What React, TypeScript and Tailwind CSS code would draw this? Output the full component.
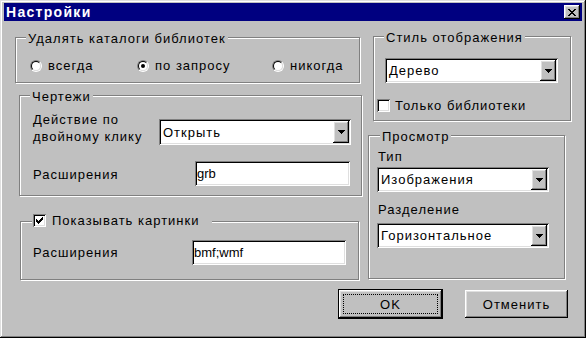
import React from 'react';

const raised =
  'shadow-[inset_-1px_-1px_0_#000,inset_1px_1px_0_#fff,inset_-2px_-2px_0_#808080,inset_2px_2px_0_#dfdfdf]';
const sunken =
  'shadow-[inset_1px_1px_0_#808080,inset_-1px_-1px_0_#fff,inset_2px_2px_0_#000,inset_-2px_-2px_0_#dfdfdf]';

function Group({ label, className, children }: { label: React.ReactNode; className: string; children: React.ReactNode }) {
  return (
    <div className={`relative border border-[#808080] shadow-[inset_1px_1px_0_#fff,1px_1px_0_#fff] ${className}`}>
      {label}
      {children}
    </div>
  );
}

function Legend({ children }: { children: React.ReactNode }) {
  return (
    <div className="absolute -top-[7px] left-[10px] bg-[#c0c0c0] px-[2px] leading-[15px]">{children}</div>
  );
}

function Combo({ value, className }: { value: string; className: string }) {
  return (
    <div className={`flex bg-white p-[2px] ${sunken} ${className}`}>
      <span className="flex flex-1 items-center pl-[2px] leading-[15px]">{value}</span>
      <div className={`flex w-[16px] items-center justify-center bg-[#c0c0c0] ${raised}`}>
        <svg width="7" height="4" viewBox="0 0 7 4" shapeRendering="crispEdges">
          <path d="M0 0h7v1H0z M1 1h5v1H1z M2 2h3v1H2z M3 3h1v1H3z" fill="#000" />
        </svg>
      </div>
    </div>
  );
}

function Edit({ value, className }: { value: string; className: string }) {
  return (
    <div className={`flex items-center bg-white pl-[2px] tracking-normal leading-[15px] ${sunken} ${className}`}>
      {value}
    </div>
  );
}

function Radio({ checked }: { checked?: boolean }) {
  return (
    <div className="h-[12px] w-[12px] shrink-0 rounded-full border border-t-[#808080] border-l-[#808080] border-r-white border-b-white">
      <div className="flex h-full w-full items-center justify-center rounded-full border border-t-black border-l-black border-r-[#dfdfdf] border-b-[#dfdfdf] bg-white">
        {checked && <div className="h-[4px] w-[4px] rounded-full bg-black" />}
      </div>
    </div>
  );
}

function Check({ checked }: { checked?: boolean }) {
  return (
    <div className={`flex h-[13px] w-[13px] shrink-0 items-center justify-center bg-white ${sunken}`}>
      {checked && (
        <svg width="7" height="7" viewBox="0 0 7 7" shapeRendering="crispEdges">
          <path
            d="M6 0h1v1H6z M5 1h2v1H5z M0 2h1v1H0z M4 2h3v1H4z M0 3h2v1H0z M3 3h3v1H3z M0 4h5v1H0z M1 5h3v1H1z M2 6h1v1H2z"
            fill="#000"
          />
        </svg>
      )}
    </div>
  );
}

export default function App() {
  return (
    <div className="h-[338px] w-[586px] bg-[#c0c0c0] px-[4px] pt-[3px] font-['Liberation_Sans',Arial,sans-serif] text-[13px] tracking-[1px] text-black shadow-[inset_-1px_-1px_0_#000,inset_1px_1px_0_#dfdfdf,inset_-2px_-2px_0_#808080,inset_2px_2px_0_#fff]">
      {/* title bar */}
      <div className="flex h-[18px] items-center justify-between bg-[#000080] pl-[2px] pr-[2px]">
        <span className="text-[14px] font-bold tracking-[1.3px] text-white">Настройки</span>
        <div className={`flex h-[14px] w-[16px] items-center justify-center bg-[#c0c0c0] ${raised}`}>
          <svg width="8" height="7" viewBox="0 0 8 7" shapeRendering="crispEdges">
            <path
              d="M0 0h2v1H0z M6 0h2v1H6z M1 1h2v1H1z M5 1h2v1H5z M2 2h4v1H2z M3 3h2v1H3z M2 4h4v1H2z M1 5h2v1H1z M5 5h2v1H5z M0 6h2v1H0z M6 6h2v1H6z"
              fill="#000"
            />
          </svg>
        </div>
      </div>

      <div className="flex">
        {/* left column */}
        <div className="flex w-[362px] flex-col">
          <Group label={<Legend>Удалять каталоги библиотек</Legend>} className="ml-[11px] mt-[16px] h-[46px] w-[345px]">
            <div className="flex pl-[14px] pt-[20px]">
              <div className="flex w-[107px] items-center gap-[6px]">
                <Radio />
                <span className="leading-[15px]">всегда</span>
              </div>
              <div className="flex w-[135px] items-center gap-[6px]">
                <Radio checked />
                <span className="leading-[15px]">по запросу</span>
              </div>
              <div className="flex items-center gap-[6px]">
                <Radio />
                <span className="leading-[15px]">никогда</span>
              </div>
            </div>
          </Group>

          <Group label={<Legend>Чертежи</Legend>} className="ml-[15px] mt-[12px] h-[101px] w-[343px]">
            <div className="flex flex-col pl-[13px] pt-[15px]">
              <div className="flex">
                <div className="w-[126px] leading-[17px]">
                  Действие по
                  <br />
                  двойному клику
                </div>
                <Combo value="Открыть" className="mt-[8px] h-[26px] w-[192px]" />
              </div>
              <div className="mt-[16px] flex items-center">
                <span className="w-[162px] pt-[2px] leading-[15px]">Расширения</span>
                <Edit value="grb" className="h-[25px] w-[155px]" />
              </div>
            </div>
          </Group>

          <Group
            label={
              <div className="absolute -top-[9px] left-[11px] flex h-[15px] items-center gap-[6px] bg-[#c0c0c0] pl-[1px] pr-[13px]">
                <Check checked />
                <span className="leading-[15px]">Показывать картинки</span>
              </div>
            }
            className="ml-[16px] mt-[25px] h-[59px] w-[339px]"
          >
            <div className="flex items-center pl-[12px] pt-[18px]">
              <span className="w-[159px] leading-[15px]">Расширения</span>
              <Edit value="bmf;wmf" className="h-[25px] w-[154px]" />
            </div>
          </Group>
        </div>

        {/* right column */}
        <div className="flex flex-col">
          <Group label={<Legend>Стиль отображения</Legend>} className="ml-[7px] mt-[15px] h-[85px] w-[198px]">
            <div className="flex flex-col pt-[21px]">
              <Combo value="Дерево" className="ml-[11px] h-[25px] w-[173px]" />
              <div className="ml-[3px] mt-[15px] flex items-center gap-[5px]">
                <Check />
                <span className="leading-[15px]">Только библиотеки</span>
              </div>
            </div>
          </Group>

          <Group
            label={<div className="absolute -top-[7px] left-[11px] bg-[#c0c0c0] px-[2px] leading-[15px]">Просмотр</div>}
            className="ml-[2px] mt-[14px] h-[144px] w-[197px]"
          >
            <div className="flex flex-col pl-[8px] pt-[13px]">
              <span className="pl-[1px] leading-[15px]">Тип</span>
              <Combo value="Изображения" className="mt-[3px] h-[25px] w-[172px]" />
              <span className="mt-[10px] pl-[1px] leading-[15px]">Разделение</span>
              <Combo value="Горизонтальное" className="mt-[6px] h-[25px] w-[172px]" />
            </div>
          </Group>
        </div>
      </div>

      {/* buttons */}
      <div className="mt-[9px] flex items-center justify-end gap-[22px] pr-[14px]">
        <div className="h-[30px] w-[105px] border border-black">
          <div className={`relative flex h-full w-full items-center justify-center bg-[#c0c0c0] ${raised}`}>
            <span className="leading-[15px]">OK</span>
            <div className="absolute inset-[4px] border border-dotted border-black" />
          </div>
        </div>
        <div className={`flex h-[28px] w-[103px] items-center justify-center bg-[#c0c0c0] ${raised}`}>
          <span className="leading-[15px]">Отменить</span>
        </div>
      </div>
    </div>
  );
}
